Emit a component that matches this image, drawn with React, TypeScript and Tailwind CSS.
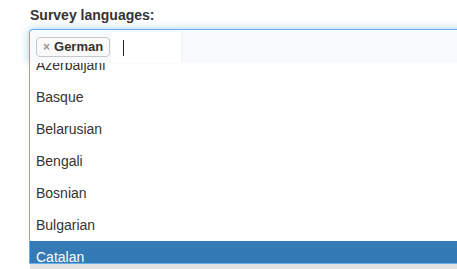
const languages = [
  "Azerbaijani",
  "Basque",
  "Belarusian",
  "Bengali",
  "Bosnian",
  "Bulgarian",
  "Catalan",
];

export default function App() {
  return (
    <div className="w-[457px] h-[269px] bg-white overflow-hidden font-['Liberation_Sans',Arial,sans-serif] text-[#333]">
      <div className="pl-[30px] pt-[5px] mb-[4px] h-[25px] text-[14px] leading-[20px] font-bold">
        Survey languages:
      </div>

      <div className="ml-[29px] w-[460px]">
        {/* selection box */}
        <div className="h-[34px] border border-b-0 border-[#66afe9] rounded-tl-[4px] bg-[#f8fbfe] shadow-[0_0_8px_rgba(102,175,233,0.6)] flex items-start pl-[6px]">
          <div className="mt-[7px] h-[20px] flex items-center gap-[4px] pl-[6px] pr-[6px] border border-[#c8c8c8] rounded-[4px] bg-[#fafafa] text-[13px] font-bold leading-[18px]">
            <span className="text-[#999] text-[12px]">×</span>
            <span className="text-[#333]">German</span>
          </div>
          <div className="ml-[1px] mt-[2px] w-[70px] h-[31px] bg-white shadow-[0_0_3px_rgba(0,0,0,0.06)] flex items-center pl-[12px]">
            <div className="w-[1px] h-[16px] bg-[#222]" />
          </div>
        </div>

        {/* dropdown */}
        <div className="h-[201px] border-l border-b border-[#66afe9] bg-white overflow-hidden">
          <ul className="mt-[-14px]">
            {languages.map((lang) => (
              <li
                key={lang}
                className={
                  lang === "Catalan"
                    ? "h-[32px] pl-[6px] py-[6px] text-[14px] leading-[20px] bg-[#337ab7] text-white"
                    : "h-[32px] pl-[6px] py-[6px] text-[14px] leading-[20px] text-[#333]"
                }
              >
                {lang}
              </li>
            ))}
          </ul>
        </div>
        <div className="ml-[1px] h-[6px] bg-[#e2e2e2]" />
      </div>
    </div>
  );
}
